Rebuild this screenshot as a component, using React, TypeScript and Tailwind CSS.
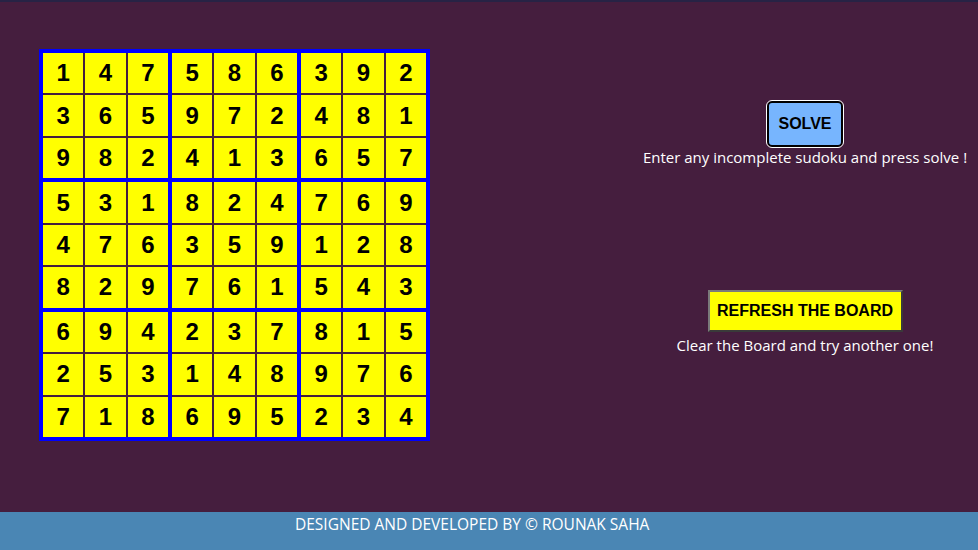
const board = [
  [1, 4, 7, 5, 8, 6, 3, 9, 2],
  [3, 6, 5, 9, 7, 2, 4, 8, 1],
  [9, 8, 2, 4, 1, 3, 6, 5, 7],
  [5, 3, 1, 8, 2, 4, 7, 6, 9],
  [4, 7, 6, 3, 5, 9, 1, 2, 8],
  [8, 2, 9, 7, 6, 1, 5, 4, 3],
  [6, 9, 4, 2, 3, 7, 8, 1, 5],
  [2, 5, 3, 1, 4, 8, 9, 7, 6],
  [7, 1, 8, 6, 9, 5, 2, 3, 4],
];

const blocks = [0, 1, 2, 3, 4, 5, 6, 7, 8];

const Block = ({ b }: { b: number }) => {
  const r0 = Math.floor(b / 3) * 3;
  const c0 = (b % 3) * 3;
  const cells: number[] = [];
  for (let r = r0; r < r0 + 3; r++)
    for (let c = c0; c < c0 + 3; c++) cells.push(board[r][c]);
  return (
    <div className="grid grid-cols-3 grid-rows-3 gap-[2px] bg-[#451e3e]">
      {cells.map((n, i) => (
        <div
          key={i}
          className="bg-[#ffff00] flex items-center justify-center text-[24px] font-bold text-black"
        >
          {n}
        </div>
      ))}
    </div>
  );
};

const App = () => {
  return (
    <div className="w-[978px] h-[550px] flex flex-col bg-[#451e3e] font-['Liberation_Sans',Arial,sans-serif]">
      <div className="h-[2px] bg-[#272345]"></div>
      <main className="flex-1 flex">
        <div className="pl-[39px] pt-[47px]">
          <div className="w-[391px] h-[392px] border-4 border-[#0000ff] bg-[#0000ff] grid grid-cols-3 grid-rows-3 gap-[4px]">
            {blocks.map((b) => (
              <Block key={b} b={b} />
            ))}
          </div>
        </div>
        <div className="ml-auto w-[346px] flex flex-col items-center pt-[99px] font-['Open_Sans','Noto_Sans',sans-serif] text-white text-[15px]">
          <button className="w-[76px] h-[46px] rounded-[5px] border-2 border-black outline outline-1 outline-white bg-[#77b5fe] text-black text-[16px] font-bold font-['Liberation_Sans',Arial,sans-serif]">
            SOLVE
          </button>
          <p className="mt-0 leading-[20px] whitespace-nowrap">
            Enter any incomplete sudoku and press solve !
          </p>
          <button className="mt-[123px] w-[195px] h-[42px] border-2 border-t-[#7a7a7a] border-l-[#7a7a7a] border-r-[#3a3a3a] border-b-[#3a3a3a] bg-[#ffff00] text-black text-[16px] font-bold font-['Liberation_Sans',Arial,sans-serif]">
            REFRESH THE BOARD
          </button>
          <p className="mt-[3px] leading-[20px] whitespace-nowrap">
            Clear the Board and try another one!
          </p>
        </div>
      </main>
      <footer className="h-[38px] bg-[#4a86b4] text-white text-[15.5px] font-['Open_Sans','Noto_Sans',sans-serif] pl-[295px] pt-[1px]">
        DESIGNED AND DEVELOPED BY © ROUNAK SAHA
      </footer>
    </div>
  );
};

export default App;
